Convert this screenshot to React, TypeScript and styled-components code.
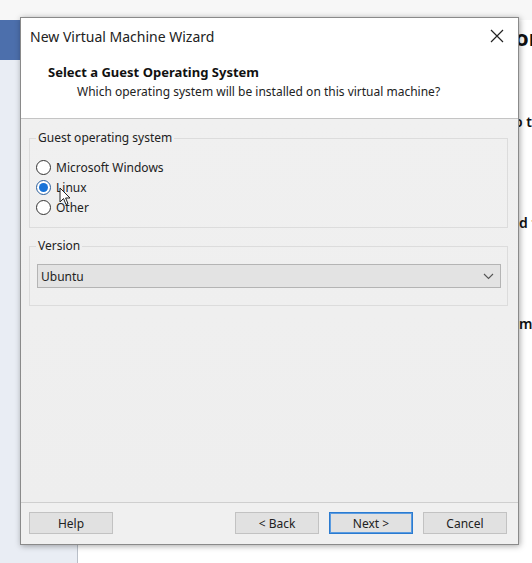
import React from "react";
import styled, { createGlobalStyle, css } from "styled-components";

const Global = createGlobalStyle`
  html, body { margin: 0; padding: 0; }
  body { width: 532px; height: 563px; overflow: hidden; background: #ffffff; font-family: "Noto Sans", "Open Sans", sans-serif; }
`;

const Desktop = styled.div`
  position: relative;
  width: 532px;
  height: 563px;
  display: flex;
  flex-direction: column;
  background: #fbfbfb;
  overflow: hidden;
`;

const TopStrip = styled.div`
  height: 20px;
  flex-shrink: 0;
  background: #f7f7f7;
`;

const PageRow = styled.div`
  flex: 1;
  display: flex;
  min-width: 0;
`;

const SideBar = styled.div`
  width: 77px;
  flex-shrink: 0;
  display: flex;
  flex-direction: column;
  border-right: 1px solid #b9bfc8;
  background: #e9edf4;
`;

const SideBlue = styled.div`
  height: 40px;
  width: 20px;
  background: #4c6fac;
`;

const PageContent = styled.div`
  flex: 1;
  min-width: 0;
  overflow: hidden;
  background: #ffffff;
  display: flex;
  flex-direction: column;
  color: #111;
  font-family: "Noto Sans", sans-serif;
`;

const BgHeading = styled.div<{ $indent: number }>`
  margin-left: ${(p) => p.$indent}px;
  font-size: 22px;
  font-weight: 700;
  line-height: 30px;
  margin-top: 2px;
  white-space: nowrap;
`;

const BgLine = styled.div<{ $top: number; $indent: number }>`
  margin-top: ${(p) => p.$top}px;
  margin-left: ${(p) => p.$indent}px;
  font-size: 14px;
  font-weight: 600;
  line-height: 18px;
  white-space: nowrap;
`;

const Dialog = styled.div`
  position: absolute;
  left: 20px;
  top: 17px;
  width: 497px;
  height: 526px;
  border: 1px solid #8a8a8a;
  box-shadow: 1px 1px 6px rgba(0, 0, 0, 0.35);
  background: #f0f0f0;
  display: flex;
  flex-direction: column;
  color: #1a1a1a;
  font-family: "Noto Sans", "Open Sans", sans-serif;
`;

const Header = styled.div`
  background: #ffffff;
  height: 100px;
  flex-shrink: 0;
  border-bottom: 1px solid #c4c4c4;
  display: flex;
  flex-direction: column;
`;

const TitleBar = styled.div`
  height: 36px;
  display: flex;
  align-items: center;
  justify-content: space-between;
  padding: 0 13px 0 9px;
`;

const Title = styled.div`
  font-size: 14px;
  color: #222;
`;

const CloseBtn = styled.div`
  width: 16px;
  height: 16px;
  display: flex;
  align-items: center;
  justify-content: center;
`;

const StepTitle = styled.div`
  margin-top: 10px;
  padding-left: 27px;
  font-size: 13px;
  font-weight: 700;
  color: #111;
  line-height: 16px;
`;

const StepSub = styled.div`
  margin-top: 4px;
  padding-left: 56px;
  font-size: 12px;
  color: #222;
  line-height: 16px;
`;

const Body = styled.div`
  flex: 1;
  display: flex;
  flex-direction: column;
  gap: 11px;
  padding: 12px 10px 0 8px;
  background: linear-gradient(#f0f0f0, #eeeeee);
`;

const Group = styled.fieldset<{ $h: number }>`
  margin: 0;
  height: ${(p) => p.$h}px;
  box-sizing: border-box;
  border: 1px solid #dcdcdc;
  border-radius: 0;
  padding: 0 0 0 6px;
  display: flex;
  flex-direction: column;
`;

const Legend = styled.legend`
  font-size: 12px;
  color: #222;
  padding: 0 2px;
  margin-left: 0;
  line-height: 14px;
`;

const RadioList = styled.div`
  display: flex;
  flex-direction: column;
  margin-top: 12px;
`;

const RadioRow = styled.label`
  display: flex;
  align-items: center;
  height: 20px;
  font-size: 12px;
  color: #222;
  gap: 5px;
`;

const RadioDot = styled.span<{ $on?: boolean }>`
  width: 15px;
  height: 15px;
  box-sizing: border-box;
  border-radius: 50%;
  border: 1px solid #333;
  background: #fff;
  display: inline-flex;
  align-items: center;
  justify-content: center;
  ${(p) =>
    p.$on &&
    css`
      border-color: #2a5d9a;
      &::after {
        content: "";
        width: 9px;
        height: 9px;
        border-radius: 50%;
        background: #1873d8;
      }
    `}
`;

const Select = styled.div`
  margin-top: 11px;
  margin-left: 1px;
  width: 464px;
  height: 24px;
  box-sizing: border-box;
  border: 1px solid #b4b4b4;
  background: #e3e3e3;
  display: flex;
  align-items: center;
  justify-content: space-between;
  padding: 0 6px 0 3px;
  font-size: 12px;
  color: #222;
`;

const Footer = styled.div`
  height: 42px;
  box-sizing: border-box;
  flex-shrink: 0;
  border-top: 1px solid #cfcfcf;
  display: flex;
  align-items: flex-start;
  padding: 9px 11px 0 8px;
  gap: 10px;
`;

const Spacer = styled.div`
  flex: 1;
`;

const Button = styled.button<{ $primary?: boolean }>`
  width: 84px;
  height: 22px;
  box-sizing: border-box;
  border: 1px solid ${(p) => (p.$primary ? "#2b7bd0" : "#c2c2c2")};
  box-shadow: ${(p) => (p.$primary ? "inset 0 0 0 1px #5a9be0" : "none")};
  background: #e1e1e1;
  font-family: inherit;
  font-size: 12px;
  color: #222;
  padding: 0;
  margin: 0;
`;

const Cursor = styled.svg`
  position: absolute;
  left: 59px;
  top: 187px;
`;

export default function App() {
  return (
    <>
      <Global />
      <Desktop>
        <TopStrip />
        <PageRow>
          <SideBar>
            <SideBlue />
          </SideBar>
          <PageContent>
            <BgHeading $indent={437}>or</BgHeading>
            <BgLine $top={61} $indent={436}>o the</BgLine>
            <BgLine $top={83} $indent={441}>d the</BgLine>
            <BgLine $top={83} $indent={441}>m</BgLine>
          </PageContent>
        </PageRow>

        <Dialog>
          <Header>
            <TitleBar>
              <Title>New Virtual Machine Wizard</Title>
              <CloseBtn>
                <svg width="14" height="14" viewBox="0 0 14 14">
                  <path d="M1 1 L13 13 M13 1 L1 13" stroke="#222" strokeWidth="1.2" />
                </svg>
              </CloseBtn>
            </TitleBar>
            <StepTitle>Select a Guest Operating System</StepTitle>
            <StepSub>Which operating system will be installed on this virtual machine?</StepSub>
          </Header>
          <Body>
            <Group $h={97}>
              <Legend>Guest operating system</Legend>
              <RadioList>
                <RadioRow>
                  <RadioDot />
                  Microsoft Windows
                </RadioRow>
                <RadioRow>
                  <RadioDot $on />
                  Linux
                </RadioRow>
                <RadioRow>
                  <RadioDot />
                  Other
                </RadioRow>
              </RadioList>
            </Group>
            <Group $h={67}>
              <Legend>Version</Legend>
              <Select>
                Ubuntu
                <svg width="11" height="7" viewBox="0 0 11 7">
                  <path d="M1 1 L5.5 5.5 L10 1" fill="none" stroke="#555" strokeWidth="1.1" />
                </svg>
              </Select>
            </Group>
          </Body>
          <Footer>
            <Button>Help</Button>
            <Spacer />
            <Button>&lt; Back</Button>
            <Button $primary>Next &gt;</Button>
            <Button>Cancel</Button>
          </Footer>
        </Dialog>

        <Cursor width="12" height="19" viewBox="0 0 12 19">
          <path d="M1 1 L1 15 L4.5 11.5 L7 17.5 L9 16.6 L6.6 11 L11 11 Z" fill="#fff" stroke="#222" strokeWidth="1" />
        </Cursor>
      </Desktop>
    </>
  );
}
